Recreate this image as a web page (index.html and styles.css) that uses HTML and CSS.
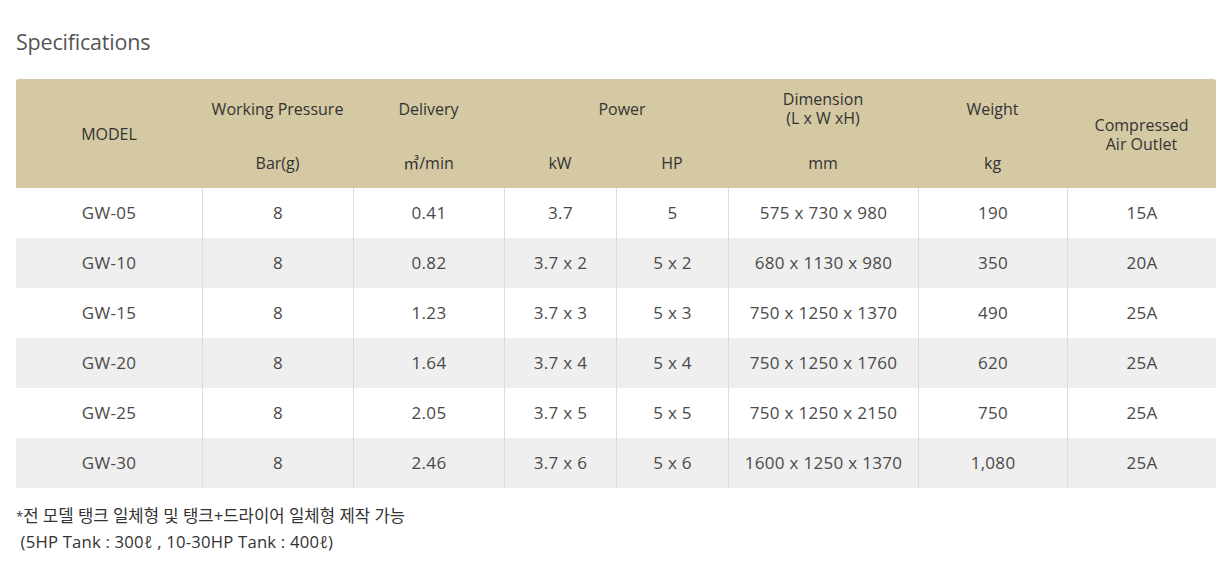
FILE: index.html
```html
<!DOCTYPE html>
<html lang="ko">
<head>
<meta charset="utf-8">
<title>Specifications</title>
<link rel="stylesheet" href="styles.css">
</head>
<body>
<div class="page">
  <h2 class="title">Specifications</h2>
  <table class="spec">
    <colgroup>
      <col class="c-model"><col class="c-wp"><col class="c-del"><col class="c-kw"><col class="c-hp"><col class="c-dim"><col class="c-wt"><col class="c-out">
    </colgroup>
    <thead>
      <tr class="h1">
        <th rowspan="2" class="first">MODEL</th>
        <th>Working Pressure</th>
        <th>Delivery</th>
        <th colspan="2" class="power">Power</th>
        <th>Dimension<br>(L x W xH)</th>
        <th>Weight</th>
        <th rowspan="2" class="last">Compressed<br>Air Outlet</th>
      </tr>
      <tr class="h2">
        <th>Bar(g)</th>
        <th>㎥/min</th>
        <th>kW</th>
        <th>HP</th>
        <th>mm</th>
        <th>kg</th>
      </tr>
    </thead>
    <tbody>
      <tr><td>GW-05</td><td>8</td><td>0.41</td><td>3.7</td><td>5</td><td>575 x 730 x 980</td><td>190</td><td>15A</td></tr>
      <tr><td>GW-10</td><td>8</td><td>0.82</td><td>3.7 x 2</td><td>5 x 2</td><td>680 x 1130 x 980</td><td>350</td><td>20A</td></tr>
      <tr><td>GW-15</td><td>8</td><td>1.23</td><td>3.7 x 3</td><td>5 x 3</td><td>750 x 1250 x 1370</td><td>490</td><td>25A</td></tr>
      <tr><td>GW-20</td><td>8</td><td>1.64</td><td>3.7 x 4</td><td>5 x 4</td><td>750 x 1250 x 1760</td><td>620</td><td>25A</td></tr>
      <tr><td>GW-25</td><td>8</td><td>2.05</td><td>3.7 x 5</td><td>5 x 5</td><td>750 x 1250 x 2150</td><td>750</td><td>25A</td></tr>
      <tr><td>GW-30</td><td>8</td><td>2.46</td><td>3.7 x 6</td><td>5 x 6</td><td>1600 x 1250 x 1370</td><td>1,080</td><td>25A</td></tr>
    </tbody>
  </table>
  <p class="note"><span class="ast">*</span>전 모델 탱크 일체형 및 탱크+드라이어 일체형 제작 가능<br><span class="sub">&nbsp;(5HP Tank : 300ℓ , 10-30HP Tank : 400ℓ)</span></p>
</div>
</body>
</html>
```

FILE: styles.css
```css
html, body {
  margin: 0;
  padding: 0;
  background: #fff;
}

.page {
  padding: 28px 0 0 16px;
  width: 1200px;
  font-family: "Open Sans", "Noto Sans CJK KR", sans-serif;
  color: #444;
}

.title {
  margin: 0 0 24px;
  font-size: 21.5px;
  font-weight: 400;
  line-height: 27px;
  color: #555;
  letter-spacing: -0.2px;
}

.spec {
  width: 1200px;
  border-collapse: separate;
  border-spacing: 0;
  table-layout: fixed;
  font-size: 16px;
}

.c-model { width: 186px; }
.c-wp { width: 151px; }
.c-del { width: 151px; }
.c-kw { width: 112px; }
.c-hp { width: 112px; }
.c-dim { width: 190px; }
.c-wt { width: 149px; }
.c-out { width: 149px; }

.spec th {
  background: #d5c9a3;
  color: #333;
  font-weight: 400;
  line-height: 19px;
  padding: 0;
  text-align: center;
  vertical-align: middle;
}

.spec .h1 th { height: 56px; padding-top: 4px; box-sizing: border-box; }
.spec .h2 th { height: 53px; padding-top: 4px; box-sizing: border-box; }

.spec .h1 th.first { border-top-left-radius: 3px; padding-top: 2px; }
.spec .h1 th.last { border-top-right-radius: 3px; padding-top: 2px; }
.spec .h1 th.power { padding-left: 12px; }

.spec td {
  height: 50px;
  padding: 0;
  text-align: center;
  vertical-align: middle;
  color: #4a4a4a;
  border-left: 1px solid #dcdcdc;
  line-height: 20px;
  font-size: 17px;
  letter-spacing: 0.3px;
}

.spec td:first-child { border-left: none; }

.spec tbody tr:nth-child(even) td { background: #efefef; }

.note {
  margin: 15px 0 0;
  font-size: 16.7px;
  line-height: 25px;
  color: #333;
}

.note .sub { letter-spacing: 0.2px; }

.ast {
  font-size: 13px;
  vertical-align: 1px;
}
```
